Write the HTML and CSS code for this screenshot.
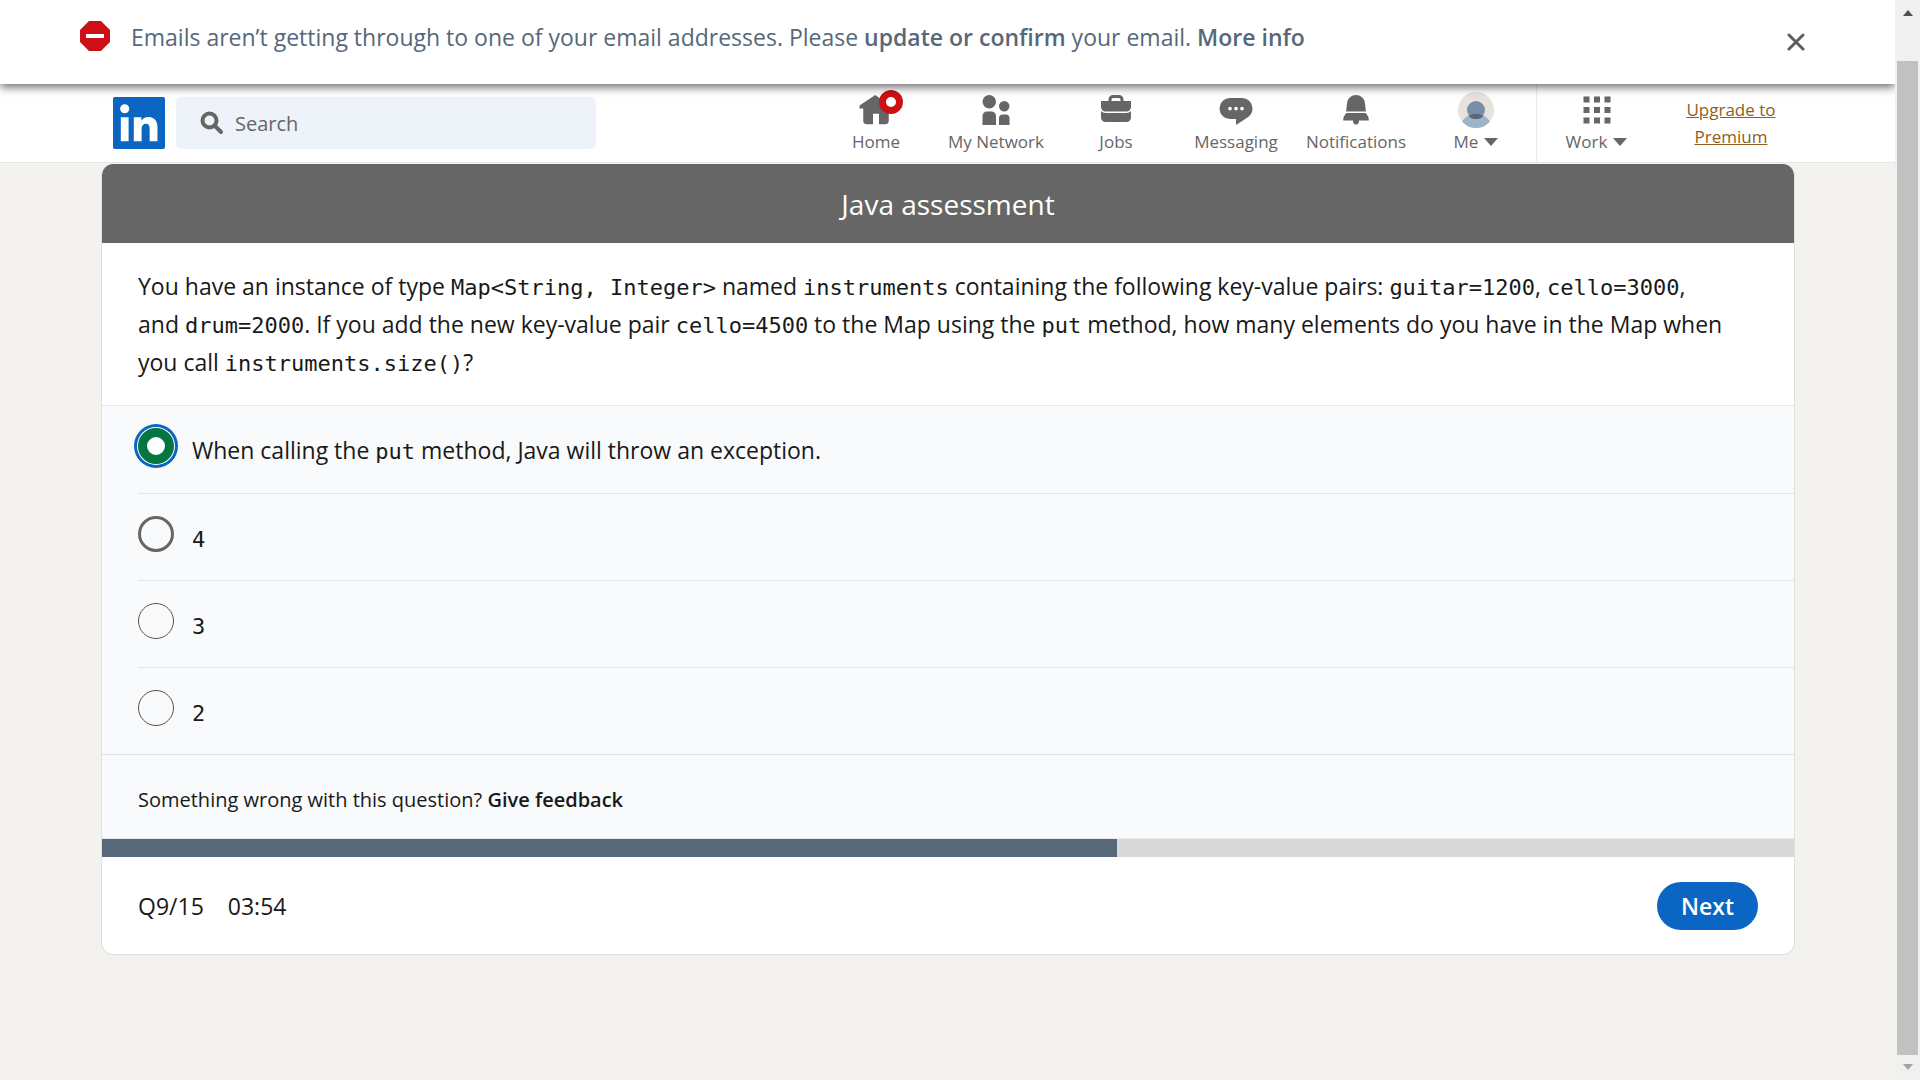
FILE: index.html
```html
<!DOCTYPE html>
<html lang="en">
<head>
<meta charset="utf-8">
<meta name="viewport" content="width=device-width, initial-scale=1">
<title>Java assessment</title>
<link rel="stylesheet" href="styles.css">
</head>
<body>
<div class="page">
  <div class="alert" role="alert">
    <svg class="alert-icon" viewBox="0 0 30 30" aria-hidden="true"><path fill="#cc1016" d="M9 0h12l9 9v12l-9 9H9l-9-9V9z"/><path fill="#fff" d="M6 13h18v4H6z"/></svg>
    <p class="alert-text">Emails aren’t getting through to one of your email addresses. Please <a href="#">update or confirm</a> your email. <a href="#">More info</a></p>
    <button class="alert-close" type="button" aria-label="Dismiss"><svg viewBox="0 0 18 18" aria-hidden="true"><path d="M2 2l14 14M16 2L2 16"/></svg></button>
  </div>

  <header class="topbar">
    <a class="logo" href="#" aria-label="LinkedIn"><svg viewBox="2 2 20 20" aria-hidden="true"><path d="M21.300 2H2.700A.7.700 0 002 2.700v18.600a.7.700 0 00.7.700h18.600a.7.700 0 00.7-.7V2.700a.7.700 0 00-.7-.7zM8 19H5v-9.200h3zM6.500 8.250A1.750 1.750 0 118.250 6.500a1.750 1.750 0 01-1.750 1.750zM19.100 19h-3v-4.740c0-1.420-.6-1.930-1.380-1.930A1.740 1.740 0 0013 14.190V19h-3V9.800h2.900v1.300a3.110 3.110 0 012.700-1.400c1.700 0 3.500.96 3.500 3.760z"/></svg></a>
    <form class="search" role="search">
      <svg viewBox="0 0 24 24" aria-hidden="true"><circle cx="9.500" cy="9.500" r="7"/><path d="M15 15l6 6"/></svg>
      <input type="search" placeholder="Search" aria-label="Search">
    </form>
    <nav class="nav" aria-label="Primary">
      <a class="nav-item" href="#"><span class="nav-icon"><svg viewBox="0 0 24 24" aria-hidden="true"><path d="M22 9.500V11h-1.500v8a2.500 2.500 0 01-2.500 2.500h-4v-7h-4v7H6A2.500 2.500 0 013.500 19v-8H1V9l10.500-7z"/></svg><span class="badge"></span></span>Home</a>
      <a class="nav-item" href="#"><span class="nav-icon"><svg viewBox="0 0 24 24" aria-hidden="true"><path d="M12 16v6H3v-6a3 3 0 013-3h3a3 3 0 013 3zm5.500-3A3.500 3.500 0 1014 9.500a3.500 3.500 0 003.500 3.500zm1 2h-2a2.500 2.500 0 00-2.500 2.500V22h7v-4.500a2.500 2.500 0 00-2.500-2.500zM7.500 2A4.500 4.500 0 1012 6.500 4.490 4.490 0 007.500 2z"/></svg></span>My Network</a>
      <a class="nav-item" href="#"><span class="nav-icon"><svg viewBox="0 0 24 24" aria-hidden="true"><path d="M17 6V5a3 3 0 00-3-3h-4a3 3 0 00-3 3v1H2v4a3 3 0 003 3h14a3 3 0 003-3V6zM9 5a1 1 0 011-1h4a1 1 0 011 1v1H9zm10 9a4 4 0 003-1.380V17a3 3 0 01-3 3H5a3 3 0 01-3-3v-4.380A4 4 0 005 14z"/></svg></span>Jobs</a>
      <a class="nav-item" href="#"><span class="nav-icon"><svg viewBox="0 0 24 24" aria-hidden="true"><path d="M16 4H8a7 7 0 000 14h4v4l8.160-5.390A6.780 6.780 0 0023 11a7 7 0 00-7-7zm-8 8.250A1.250 1.250 0 119.250 11 1.250 1.250 0 018 12.250zm4 0A1.250 1.250 0 1113.250 11 1.250 1.250 0 0112 12.250zm4 0A1.250 1.250 0 1117.250 11 1.250 1.250 0 0116 12.250z"/></svg></span>Messaging</a>
      <a class="nav-item" href="#"><span class="nav-icon"><svg viewBox="0 0 24 24" aria-hidden="true"><path d="M20.500 19h-6.600a2 2 0 11-3.800 0H3.500v-1a4.500 4.500 0 011.170-2.830L5.600 14h12.800l.93 1.170A4.500 4.500 0 0120.500 18zM18 7.440A6 6 0 0012 2a6 6 0 00-6 5.440L5.400 13h13.200z"/></svg></span>Notifications</a>
      <button class="nav-item" type="button"><span class="nav-icon"><svg viewBox="0 0 36 36" aria-hidden="true"><clipPath id="face"><circle cx="18" cy="18" r="18"/></clipPath><g clip-path="url(#face)"><path fill="#e7e2dc" d="M0 0h36v36H0z"/><circle cx="18" cy="39" r="17" fill="#9db3c8"/><circle cx="18" cy="18" r="9" fill="#788fa5"/><path fill="#56687a" d="M10.500 23.700a17 17 0 0115 0A9 9 0 0118 27a9 9 0 01-7.500-3.300z"/></g></svg></span><span class="nav-label">Me<i class="caret"></i></span></button>
      <button class="nav-item nav-work" type="button"><span class="nav-icon"><svg viewBox="0 0 24 24" aria-hidden="true"><path d="M3 3h4v4H3zm7 0h4v4h-4zm7 0h4v4h-4zM3 10h4v4H3zm7 0h4v4h-4zm7 0h4v4h-4zM3 17h4v4H3zm7 0h4v4h-4zm7 0h4v4h-4z"/></svg></span><span class="nav-label">Work<i class="caret"></i></span></button>
      <a class="premium" href="#">Upgrade to Premium</a>
    </nav>
  </header>

  <main class="main">
    <form class="card">
      <h1 class="card-title">Java assessment</h1>
      <p class="question" id="question">You have an instance of type <code>Map&lt;String, Integer&gt;</code> named <code>instruments</code> containing the following key-value pairs: <code>guitar=1200</code>, <code>cello=3000</code>, <span class="keep">and <code>drum=2000</code></span>. If you add the new key-value pair <code>cello=4500</code> to the Map using the <code>put</code> method, how many elements do you have in the Map when <span class="keep">you call <code>instruments.size()</code>?</span></p>
      <div class="options" role="radiogroup" aria-labelledby="question">
        <label class="option"><input type="radio" name="answer" checked><span>When calling the <code>put</code> method, Java will throw an exception.</span></label>
        <label class="option option-active"><input type="radio" name="answer"><code>4</code></label>
        <label class="option"><input type="radio" name="answer"><code>3</code></label>
        <label class="option"><input type="radio" name="answer"><code>2</code></label>
      </div>
      <p class="feedback">Something wrong with this question? <a href="#">Give feedback</a></p>
      <div class="progress" role="progressbar" aria-label="Progress" aria-valuemin="0" aria-valuemax="15" aria-valuenow="9"><div class="progress-fill" style="width:60%"></div></div>
      <footer class="card-footer">
        <span>Q9/15</span>
        <span>03:54</span>
        <button class="next" type="button">Next</button>
      </footer>
    </form>
  </main>
</div>
<div class="scrollbar" aria-hidden="true">
  <i class="arrow-up"></i>
  <div class="thumb"></div>
  <i class="arrow-down"></i>
</div>
</body>
</html>
```
FILE: styles.css
```css
* { box-sizing: border-box; }

body {
  margin: 0;
  display: flex;
  min-height: 100vh;
  background: #f3f2ef;
  color: #191919;
  font-family: "Open Sans", "Noto Sans", sans-serif;
  font-size: 23px;
  line-height: 38px;
}

h1, p { margin: 0; }
a { color: inherit; text-decoration: none; }
button { border: 0; background: none; padding: 0; color: inherit; font: inherit; cursor: pointer; }
code { font-family: "DejaVu Sans Mono", monospace; font-size: 22px; line-height: 1; }
svg { display: block; }

.page { flex: 1; min-width: 0; overflow-x: clip; }

/* Alert strip */
.alert {
  position: relative;
  z-index: 1;
  display: flex;
  align-items: flex-start;
  gap: 21px;
  min-height: 84px;
  padding: 18px 90px 18px 80px;
  background: #fff;
  color: #56687a;
  box-shadow: 0 3px 9px rgba(0, 0, 0, .6);
}
.alert-icon { flex: none; width: 30px; height: 30px; margin-top: 3px; }
.alert-text { flex: 1; }
.alert-text a, .feedback a { font-weight: 600; }
.alert-close { padding: 15px 0; }
.alert-close svg { width: 18px; height: 18px; fill: none; stroke: #5e5e5e; stroke-width: 3; stroke-linecap: round; }

/* Header */
.topbar {
  display: flex;
  align-items: center;
  min-height: 79px;
  padding: 0 89px 0 113px;
  background: #fff;
  border-bottom: 1px solid #e6e6e4;
}
.logo svg { width: 52px; height: 52px; fill: #0a66c2; }
.search {
  display: flex;
  align-items: center;
  gap: 11px;
  width: 420px;
  height: 52px;
  margin-left: 11px;
  padding: 0 24px;
  border-radius: 6px;
  background: #edf3f8;
}
.search svg { flex: none; width: 24px; height: 24px; fill: none; stroke: #666; stroke-width: 4; stroke-linecap: round; }
.search input { flex: 1; min-width: 0; border: 0; padding: 2px 0 0; background: none; font: inherit; font-size: 20px; outline: 0; }
.search input::placeholder { color: #666; opacity: 1; }

.nav { display: flex; align-items: stretch; margin-left: auto; color: #666; font-size: 17px; line-height: 27px; }
.nav-item { display: flex; flex-direction: column; align-items: center; width: 120px; padding: 8px 0 7px; }
.nav-icon { position: relative; width: 36px; height: 36px; }
.nav-icon svg { width: 36px; height: 36px; fill: #666; }
.nav-label { display: flex; align-items: center; gap: 6px; }
.badge {
  position: absolute;
  top: -2px;
  right: -9px;
  width: 24px;
  height: 24px;
  border: 7px solid #cc1016;
  border-radius: 50%;
  background: #fff;
}
.caret { border: 7px solid transparent; border-top: 8px solid #666; border-bottom: 0; }
.nav-work { border-left: 1px solid #ebebeb; }
.premium { align-self: center; width: 150px; padding: 0 24px; color: #8f5e1a; text-align: center; text-decoration: underline; }

/* Assessment card */
.main { padding: 1px 100px 40px 101px; }
.card { overflow: hidden; border: 1px solid #e0dfdc; border-top: 0; border-radius: 12px; background: #fff; }
.card-title {
  padding: 21px 34px 19px;
  background: #666;
  color: #fff;
  font-size: 28px;
  font-weight: 400;
  line-height: 39px;
  text-align: center;
}
.question { padding: 24px 60px 24px 36px; }
.keep { white-space: nowrap; }
.options { border-top: 1px solid #e6e8ea; background: #f9fafb; padding-left: 36px; }
.option { display: flex; align-items: flex-start; gap: 18px; min-height: 87px; padding: 22px 36px 21px 0; }
.option + .option { border-top: 1px solid #e3e5e7; }
.option > span { margin-top: 3px; }
.option > code { margin-top: 5px; line-height: 38px; }
.option input {
  appearance: none;
  flex: none;
  width: 36px;
  height: 36px;
  margin: 0;
  border: 1px solid #555;
  border-radius: 50%;
}
.option-active input { border: 3px solid #666; }
.option input:checked { border: 9px solid #057642; background: #fff; box-shadow: 0 0 0 1px #fff, 0 0 0 4px #0a66c2; }
.feedback { padding: 26px 36px 19px; border-top: 1px solid #e0e3e6; background: #f9fafb; font-size: 20px; }
.progress { height: 19px; border-top: 1px solid #e6e8ea; background: #d9d9d9; }
.progress-fill { height: 100%; background: #56687a; }
.card-footer { display: flex; align-items: center; gap: 24px; padding: 25px 36px 24px; }
.next { height: 48px; margin-left: auto; padding: 0 24px; border-radius: 24px; background: #0a66c2; color: #fff; font-weight: 600; }

/* Page scrollbar */
.scrollbar {
  position: sticky;
  top: 0;
  display: flex;
  flex-direction: column;
  align-items: center;
  width: 25px;
  height: 100vh;
  padding: 10px 2px 10px;
  background: #f0f0f0;
}
.thumb { flex: 1; width: 21px; margin: 45px 0 9px; background: #c1c1c1; }
.arrow-up { border: 5px solid transparent; border-top: 0; border-bottom: 6px solid #505050; }
.arrow-down { border: 5px solid transparent; border-bottom: 0; border-top: 6px solid #a3a3a3; }
```
